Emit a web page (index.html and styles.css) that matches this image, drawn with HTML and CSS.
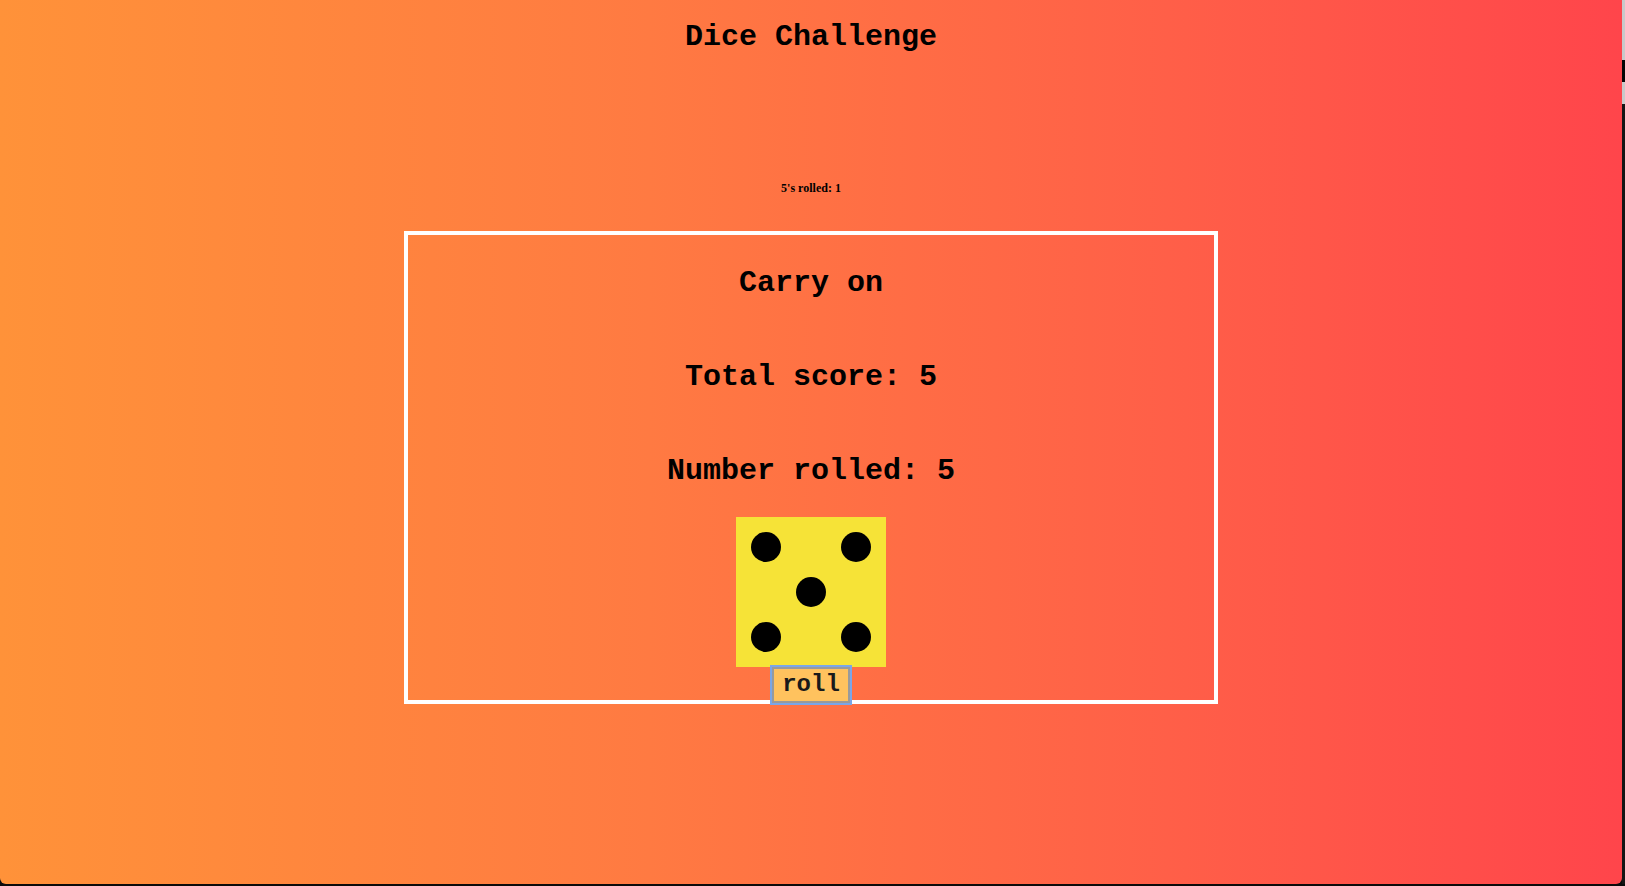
FILE: index.html
```html
<!DOCTYPE html>
<html lang="en">
<head>
<meta charset="utf-8">
<title>Dice Challenge</title>
<link rel="stylesheet" href="styles.css">
</head>
<body>
<div class="desktop">
  <div class="window">
    <h1 class="title">Dice Challenge</h1>
    <h6 class="stat">5's rolled: 1</h6>
    <div class="board">
      <h2 class="line">Carry on</h2>
      <h2 class="line">Total score: 5</h2>
      <h2 class="line">Number rolled: 5</h2>
      <div class="die">
        <span class="dot tl"></span>
        <span class="dot tr"></span>
        <span class="dot mid"></span>
        <span class="dot bl"></span>
        <span class="dot br"></span>
      </div>
      <button class="roll" type="button">roll</button>
    </div>
  </div>
  <div class="edge"></div>
</div>
</body>
</html>
```
FILE: styles.css
```css
html, body {
  margin: 0;
  padding: 0;
  background: #0b0b0b;
}

.desktop {
  display: flex;
  width: 1625px;
  height: 886px;
  background: #0b0b0b;
  overflow: hidden;
}

.window {
  width: 1622px;
  height: 884px;
  flex: none;
  display: flex;
  flex-direction: column;
  align-items: center;
  background: linear-gradient(to right, #ff9239 0%, #ff7a42 40%, #ff5f48 72%, #ff454b 100%);
  border-radius: 0 0 6px 6px;
  font-family: "Liberation Mono", "Courier New", monospace;
  color: #000;
}

.edge {
  width: 3px;
  height: 884px;
  flex: none;
  background: linear-gradient(to bottom, #c9c9c9 0, #c9c9c9 60px, #050505 60px, #050505 82px, #c9c9c9 82px, #c9c9c9 104px, #151515 104px);
}

.title {
  margin: 19px 0 0;
  font-size: 30px;
  line-height: 36px;
  font-weight: bold;
}

.stat {
  margin: 126px 0 0;
  font-family: "Liberation Serif", "Times New Roman", serif;
  font-size: 12px;
  line-height: 14px;
  font-weight: bold;
}

.board {
  margin-top: 36px;
  width: 806px;
  height: 465px;
  border: 4px solid #ffffff;
  display: flex;
  flex-direction: column;
  align-items: center;
}

.line {
  margin: 29px 0;
  font-size: 30px;
  line-height: 36px;
  font-weight: bold;
}

.line:first-child {
  margin-top: 30px;
}

.line:nth-child(3) {
  margin-bottom: 28px;
}

.die {
  width: 120px;
  height: 120px;
  padding: 15px;
  background: #f6e337;
  display: grid;
  grid-template-columns: repeat(3, 30px);
  grid-template-rows: repeat(3, 30px);
  gap: 15px;
  flex: none;
}

.dot {
  width: 30px;
  height: 30px;
  border-radius: 50%;
  background: #000;
}

.tl { grid-area: 1 / 1; }
.tr { grid-area: 1 / 3; }
.mid { grid-area: 2 / 2; }
.bl { grid-area: 3 / 1; }
.br { grid-area: 3 / 3; }

.roll {
  margin: 0;
  padding: 2px 8px;
  font-family: "Liberation Mono", "Courier New", monospace;
  font-size: 24px;
  line-height: 28px;
  font-weight: bold;
  color: #1a1a1a;
  background: #ffc25e;
  border: 2px solid #9a9a9a;
  outline: 2px solid #7aa6e8;
  outline-offset: 0;
  flex: none;
  position: relative;
}
```
